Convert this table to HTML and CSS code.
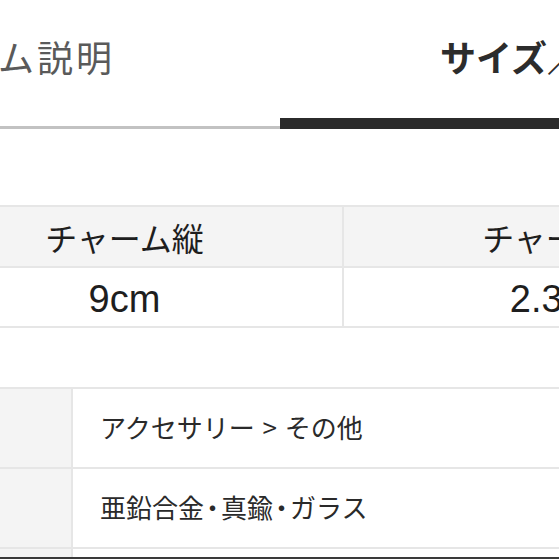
FILE: index.html
```html
<!DOCTYPE html>
<html lang="ja">
<head>
<meta charset="utf-8">
<title>商品詳細</title>
<link rel="stylesheet" href="styles.css">
</head>
<body>
<div class="page">
  <nav class="tabs">
    <div class="tab tab-desc"><span>アイテム説明</span></div>
    <div class="tab tab-size is-active"><span>サイズ／重さ</span></div>
  </nav>

  <section class="size-table">
    <div class="cell head">チャーム縦</div>
    <div class="cell head">チャーム横</div>
    <div class="cell val">9cm</div>
    <div class="cell val">2.3cm</div>
  </section>

  <dl class="details">
    <div class="row"><dt>カテゴリー</dt><dd>アクセサリー <span class="gt">&gt;</span> その他</dd></div>
    <div class="row"><dt>素材</dt><dd>亜鉛合金<span class="sep">・</span>真鍮<span class="sep">・</span>ガラス</dd></div>
    <div class="row"><dt>カラー</dt><dd>ゴールド</dd></div>
  </dl>
</div>
<div class="bottom-bar"></div>
</body>
</html>
```

FILE: styles.css
```css
html, body {
  margin: 0;
  padding: 0;
  background: #fff;
}
body {
  width: 559px;
  height: 559px;
  overflow: hidden;
  font-family: "Noto Sans CJK JP", "Noto Sans", sans-serif;
  color: #222;
}
.page {
  width: 559px;
}

/* tabs */
.tabs {
  display: flex;
  align-items: flex-end;
  height: 129px;
}
.tab {
  flex: none;
  height: 129px;
  box-sizing: border-box;
  display: flex;
  padding-top: 38px;
  font-size: 36px;
  line-height: 36px;
  white-space: nowrap;
  overflow: visible;
}
.tab-desc {
  width: 280px;
  justify-content: flex-end;
  padding-right: 165px;
  letter-spacing: 3px;
  color: #5a5a5a;
  border-bottom: 3px solid #c2c2c2;
}
.tab-size {
  width: 279px;
  justify-content: flex-start;
  padding-left: 160px;
  color: #2c2c2c;
  font-weight: 700;
  border-bottom: 11px solid #2b2b2b;
}

/* size table */
.size-table {
  margin: 76px 0 0 -95px;
  width: 876px;
  box-sizing: border-box;
  display: grid;
  grid-template-columns: 435px 435px;
  grid-template-rows: 59px 58px;
  gap: 2px;
  border: 2px solid #e6e6e6;
  background: #e6e6e6;
}
.cell {
  display: flex;
  align-items: center;
  justify-content: center;
  white-space: nowrap;
}
.cell.head {
  background: #f4f4f4;
  font-size: 32px;
  color: #1e1e1e;
}
.cell.val {
  background: #fff;
  font-family: "Liberation Sans", "Noto Sans CJK JP", sans-serif;
  font-size: 38px;
  color: #1e1e1e;
  padding-top: 4px;
  box-sizing: border-box;
}

/* details */
.details {
  margin: 59px 0 0 -220px;
  width: 779px;
  border-top: 2px solid #e6e6e6;
}
.row {
  display: grid;
  grid-template-columns: 293px 1fr;
  height: 80px;
  box-sizing: border-box;
  border-bottom: 2px solid #e6e6e6;
}
.row dt {
  background: #f4f4f4;
  border-right: 2px solid #e6e6e6;
  display: flex;
  align-items: center;
  padding-left: 27px;
  font-size: 26px;
  color: #333;
}
.row dd {
  margin: 0;
  display: flex;
  align-items: center;
  padding-left: 27px;
  padding-bottom: 3px;
  font-size: 26px;
  color: #2a2a2a;
  white-space: pre;
}
.gt {
  padding: 0 2px;
}
.sep {
  font-feature-settings: "halt";
  padding: 0 2px;
}

.bottom-bar {
  position: fixed;
  left: 0;
  right: 0;
  bottom: 0;
  height: 2px;
  background: #3a3a3a;
}
```
